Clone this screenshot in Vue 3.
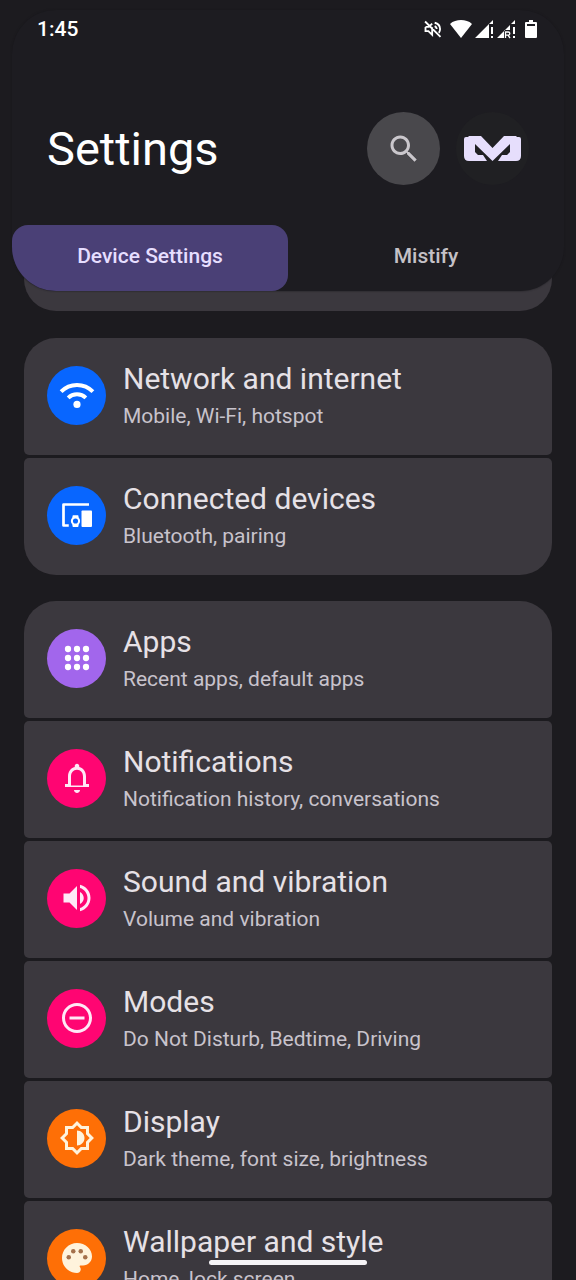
<script setup>
const groups = [
  [
    { title: 'Network and internet', sub: 'Mobile, Wi-Fi, hotspot', icon: 'wifi', tone: 'blue' },
    { title: 'Connected devices', sub: 'Bluetooth, pairing', icon: 'devices', tone: 'blue' },
  ],
  [
    { title: 'Apps', sub: 'Recent apps, default apps', icon: 'apps', tone: 'purple' },
    { title: 'Notifications', sub: 'Notification history, conversations', icon: 'bell', tone: 'pink' },
    { title: 'Sound and vibration', sub: 'Volume and vibration', icon: 'sound', tone: 'pink' },
    { title: 'Modes', sub: 'Do Not Disturb, Bedtime, Driving', icon: 'modes', tone: 'pink' },
    { title: 'Display', sub: 'Dark theme, font size, brightness', icon: 'display', tone: 'orange' },
    { title: 'Wallpaper and style', sub: 'Home, lock screen', icon: 'palette', tone: 'orange' },
  ],
]

const paths = {
  bell: 'M12 22c1.1 0 2-.9 2-2h-4c0 1.1.9 2 2 2zm6-6v-5c0-3.07-1.63-5.64-4.5-6.32V4c0-.83-.67-1.5-1.5-1.5s-1.5.67-1.5 1.5v.68C7.64 5.36 6 7.92 6 11v5H4v2h16v-2h-2zm-2 1H8v-6c0-2.48 1.51-4.5 4-4.5s4 2.02 4 4.5v6z',
  sound: 'M3 9v6h4l5 5V4L7 9H3zm13.5 3c0-1.77-1.02-3.29-2.5-4.03v8.05c1.48-.73 2.5-2.25 2.5-4.02zM14 3.23v2.06c2.89.86 5 3.54 5 6.71s-2.11 5.85-5 6.71v2.06c4.01-.91 7-4.49 7-8.77s-2.99-7.86-7-8.77z',
  modes: 'M7 11h10v2H7zM12 2C6.48 2 2 6.48 2 12s4.48 10 10 10 10-4.48 10-10S17.52 2 12 2zm0 18c-4.41 0-8-3.59-8-8s3.59-8 8-8 8 3.59 8 8-3.59 8-8 8z',
  display: 'M20 8.69V4h-4.69L12 .69 8.69 4H4v4.69L.69 12 4 15.31V20h4.69L12 23.31 15.31 20H20v-4.69L23.31 12 20 8.69zm-2 5.79V18h-3.52L12 20.48 9.52 18H6v-3.52L3.52 12 6 9.52V6h3.52L12 3.52 14.48 6H18v3.52L20.48 12 18 14.48zM12 7v10c2.76 0 5-2.24 5-5s-2.24-5-5-5z',
  palette: 'M12 2C6.49 2 2 6.49 2 12s4.49 10 10 10c1.38 0 2.5-1.12 2.5-2.5 0-.61-.23-1.2-.64-1.67-.08-.1-.13-.21-.13-.33 0-.28.22-.5.5-.5H16c3.31 0 6-2.69 6-6 0-4.96-4.49-9-10-9z',
}

const paletteWells = [
  [6.5, 11.5],
  [9.5, 7.5],
  [14.5, 7.5],
  [17.5, 11.5],
]
</script>

<template>
  <div class="screen">
    <header class="panel">
      <div class="status">
        <span class="clock">1:45</span>
        <div class="indicators">
          <svg class="muted" viewBox="0 0 24 24" aria-hidden="true">
            <path fill="none" stroke="currentColor" stroke-width="2.200" d="M3 9.500h4l4-4M11 10v9l-4.500-4.500H3V9.500M14 4.500c4 1 6.500 4 6.500 7.500 0 1.700-.5 3.300-1.500 4.600M14 8.500c1.700.8 2.500 2 2.500 3.500M2.500 3l18.500 18.500" />
          </svg>
          <svg class="wave" viewBox="0 0 24 20" aria-hidden="true">
            <path fill="currentColor" d="M12 19 1 5C4 2 8 1 12 1s8 1 11 4z" />
          </svg>
          <svg class="signal" viewBox="0 0 20 20" aria-hidden="true">
            <path fill="currentColor" d="M0 19 14 5v14zM14 5l4-4v4zM16 8h2v7h-2zM16 17h2v2h-2z" />
          </svg>
          <svg class="signal" viewBox="0 0 20 20" aria-hidden="true">
            <path fill="currentColor" d="M0 19 13 6v5H7v8zM14 5l4-4v4zM16 8h2v7h-2zM16 17h2v2h-2z" />
            <path fill="none" stroke="currentColor" stroke-width="1.300" d="M8.500 19v-6h2.800c2 0 2 3.200 0 3.200H8.500M11 16.200l2 2.800" />
          </svg>
          <svg class="battery" viewBox="0 0 12 20" aria-hidden="true">
            <path fill="currentColor" fill-rule="evenodd" d="M4 1h4v2h3a1 1 0 0 1 1 1v14a1 1 0 0 1-1 1H1a1 1 0 0 1-1-1V4a1 1 0 0 1 1-1h3zM2 5v2h8V5z" />
          </svg>
        </div>
      </div>
      <div class="heading">
        <h1>Settings</h1>
        <button class="round search" type="button" aria-label="Search settings">
          <svg viewBox="0 0 24 24" aria-hidden="true">
            <path fill="currentColor" d="M15.500 14h-.79l-.28-.27C15.410 12.590 16 11.110 16 9.500 16 5.910 13.090 3 9.500 3S3 5.910 3 9.500 5.910 16 9.500 16c1.610 0 3.090-.59 4.230-1.570l.27.28v.79l5 4.990L20.490 19l-4.990-5zm-6 0C7.010 14 5 11.990 5 9.500S7.010 5 9.500 5 14 7.010 14 9.500 11.990 14 9.500 14z" />
          </svg>
        </button>
        <button class="round brand" type="button" aria-label="Profile">
          <svg viewBox="0 0 57 25" aria-hidden="true">
            <path fill="currentColor" d="M2 1h2l1-1h12l11.500 12L40 0h12l1 1h2q2 0 2 2v17q0 5-5 5H34l4-6h5l3-3V8L28.500 25 11 8v8l3 3h5l4 6H5q-5 0-5-5V3q0-2 2-2z" />
          </svg>
        </button>
      </div>
      <nav class="tabs" aria-label="Settings sections">
        <button class="tab active" type="button">Device Settings</button>
        <button class="tab" type="button">Mistify</button>
      </nav>
    </header>

    <main class="list">
      <div class="passed"></div>
      <ul v-for="(group, g) in groups" :key="g" class="group">
        <li v-for="item in group" :key="item.title">
          <button class="row" type="button">
            <span class="badge" :class="item.tone">
              <svg viewBox="0 0 24 24" aria-hidden="true">
                <g v-if="item.icon === 'wifi'">
                  <path fill="none" stroke="currentColor" stroke-width="2.600" d="M1.400 9.800a14.800 14.800 0 0 1 21.200 0M6.100 13.900a8.400 8.400 0 0 1 11.800 0" />
                  <circle cx="12" cy="18.300" r="2.400" fill="currentColor" />
                </g>
                <g v-else-if="item.icon === 'devices'">
                  <path fill="none" stroke="currentColor" stroke-width="1.800" stroke-linejoin="round" d="M20 5H3v14h3.500" />
                  <rect x="15" y="9" width="7" height="11" rx=".6" fill="currentColor" />
                  <path fill="currentColor" fill-rule="evenodd" d="M9.200 12.200h3.600l.4 1.600c1.200 1.200 1.200 3.200 0 4.400l-.4 1.800H9.200l-.4-1.800c-1.200-1.200-1.200-3.200 0-4.400zM11 14.300a1.700 1.700 0 1 0 0 3.400 1.700 1.700 0 0 0 0-3.400z" />
                </g>
                <g v-else-if="item.icon === 'apps'" fill="currentColor">
                  <template v-for="y in 3" :key="y">
                    <circle v-for="x in 3" :key="x" :cx="x * 6" :cy="y * 6" r="2.100" />
                  </template>
                </g>
                <path v-else fill="currentColor" fill-rule="evenodd" :d="paths[item.icon]" />
                <g v-if="item.icon === 'palette'" fill="#a5714c">
                  <circle v-for="[x, y] in paletteWells" :key="x" :cx="x" :cy="y" r="1.500" />
                </g>
              </svg>
            </span>
            <span class="copy">
              <span class="title">{{ item.title }}</span>
              <span class="sub">{{ item.sub }}</span>
            </span>
          </button>
        </li>
      </ul>
    </main>
    <div class="handle"></div>
  </div>
</template>

<style>
body {
  background: #1c1b1f;
}
</style>

<style scoped>
.screen {
  position: relative;
  height: 100vh;
  overflow: hidden;
  box-sizing: border-box;
  padding: 10px 12px 0;
  background: #1c1b1f;
  color: #e6e1e6;
  font-family: Roboto, "Noto Sans", sans-serif;
}
button {
  border: 0;
  padding: 0;
  font: inherit;
  color: inherit;
  cursor: pointer;
}
.panel {
  position: relative;
  z-index: 1;
  overflow: hidden;
  border-radius: 44px;
  background: #1d1c21;
  box-shadow: 0 0 2px #18171b;
}
.status {
  display: flex;
  align-items: center;
  justify-content: space-between;
  height: 38px;
  padding: 0 27px 0 25px;
  color: #fff;
}
.clock {
  font-size: 21px;
  font-weight: 500;
}
.indicators {
  display: flex;
  align-items: center;
}
.indicators svg {
  height: 20px;
}
.muted {
  width: 20px;
  margin-right: 6px;
}
.wave {
  width: 24px;
}
.signal {
  width: 20px;
  margin-left: 2px;
}
.battery {
  width: 12px;
  margin-left: 8px;
}
.heading {
  display: flex;
  align-items: center;
  gap: 16px;
  padding: 64px 35px 40px;
}
h1 {
  flex: 1;
  margin: 0;
  color: #fff;
  font-size: 47px;
  font-weight: 400;
  line-height: 56px;
}
.round {
  display: grid;
  place-items: center;
  width: 73px;
  height: 73px;
  border-radius: 50%;
}
.search {
  background: #49484c;
  color: #cac7cc;
}
.search svg {
  width: 36px;
}
.brand {
  background: #202023;
  color: #e6defc;
}
.brand svg {
  width: 57px;
}
.tabs {
  display: grid;
  grid-template-columns: 1fr 1fr;
}
.tab {
  height: 66px;
  padding-bottom: 4px;
  border-radius: 16px;
  background: transparent;
  color: #c4c1c7;
  font-size: 21px;
  font-weight: 500;
}
.tab.active {
  background: #4a4076;
  color: #e6deff;
}
.list {
  padding: 0 12px;
}
.passed {
  height: 117px;
  margin: -97px 0 27px;
  border-radius: 4px 4px 32px 32px;
  background: #3b383e;
}
.group {
  display: grid;
  gap: 3px;
  margin: 0 0 26px;
  padding: 0;
  overflow: hidden;
  border-radius: 32px;
  list-style: none;
}
.row {
  display: flex;
  align-items: center;
  gap: 17px;
  width: 100%;
  height: 117px;
  padding: 0 23px 3px;
  border-radius: 5px;
  background: #3b383e;
  text-align: left;
}
.badge {
  display: grid;
  place-items: center;
  flex: none;
  width: 59px;
  height: 59px;
  border-radius: 50%;
  color: #fff;
}
.badge svg {
  width: 36px;
  height: 36px;
}
.blue {
  background: #0866ff;
}
.purple {
  background: #a266ec;
}
.pink {
  background: #ff0572;
  color: #ffe8f6;
}
.orange {
  background: #fe6f06;
  color: #fff3dc;
}
.title,
.sub {
  display: block;
}
.title {
  padding-top: 4px;
  font-size: 30px;
  line-height: 38px;
}
.sub {
  color: #c8c3cc;
  font-size: 21px;
  line-height: 36px;
}
.handle {
  position: absolute;
  z-index: 2;
  bottom: 15px;
  left: 50%;
  width: 158px;
  height: 5px;
  margin-left: -79px;
  border-radius: 3px;
  background: #f6f4f7;
}
</style>
